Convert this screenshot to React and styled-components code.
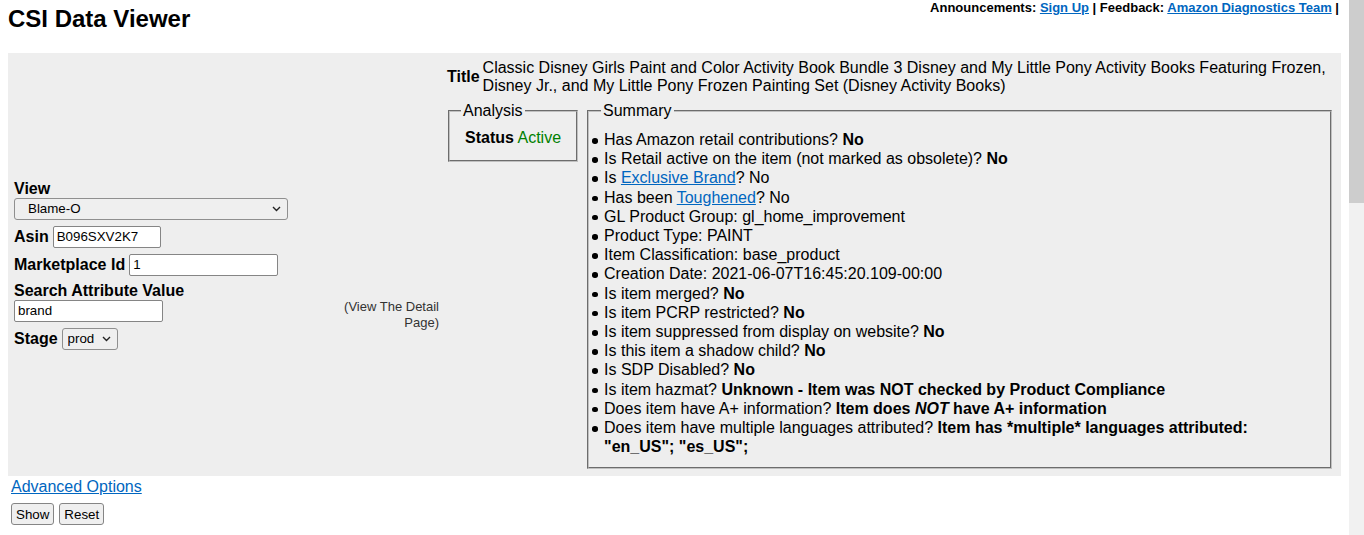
import React from "react";
import styled, { createGlobalStyle } from "styled-components";

const GlobalStyle = createGlobalStyle`
  html, body {
    margin: 0;
    overflow: hidden;
  }
  body {
    font-family: "Liberation Sans", Arial, sans-serif;
    font-size: 16px;
    color: #000;
    background: #fff;
  }
`;

const Shell = styled.div`
  display: flex;
  height: 100vh;
`;

const Page = styled.div`
  flex: 1;
  min-width: 0;
  overflow: hidden;
  padding: 0 8px;
`;

const ScrollTrack = styled.div`
  flex: none;
  width: 15px;
  background: #f1f1f1;
`;

const ScrollThumb = styled.div`
  height: 203px;
  background: #cdcdcd;
`;

const Header = styled.header`
  display: flex;
  justify-content: space-between;
  align-items: flex-start;
  height: 53px;
`;

const PageTitle = styled.h1`
  margin: 0;
  padding-top: 5px;
  font-size: 24px;
  line-height: 28px;
  font-weight: bold;
`;

const TopLinks = styled.div`
  font-size: 13px;
  line-height: 15px;
  font-weight: bold;
  padding-right: 2px;
`;

const Link = styled.a`
  color: #0066c0;
  text-decoration: underline;
  cursor: pointer;
`;

const Panel = styled.div`
  display: grid;
  grid-template-columns: 435px 1fr;
  background: #eeeeee;
  min-height: 423px;
`;

const FormCell = styled.div`
  display: grid;
  grid-template-columns: 1fr auto;
  align-content: center;
  padding: 0 4px 0 6px;
`;

const Label = styled.label`
  grid-column: 1;
  display: block;
  font-weight: bold;
  font-size: 16px;
  line-height: 18px;
`;

const FieldRow = styled.div`
  grid-column: 1;
  display: flex;
  align-items: center;
  gap: 4px;
  height: 22px;
  margin-bottom: ${(p) => (p.$last ? 0 : 6)}px;
`;

const TextInput = styled.input`
  box-sizing: border-box;
  width: ${(p) => p.$w}px;
  height: 22px;
  padding: 1px 3px;
  border: 1px solid #858585;
  border-radius: 2px;
  background: #fff;
  font-family: "Liberation Sans", Arial, sans-serif;
  font-size: 13.33px;
  color: #000;
`;

const SelectWrap = styled.div`
  position: relative;
  width: ${(p) => p.$w}px;
  height: 22px;
`;

const Select = styled.select`
  appearance: none;
  -webkit-appearance: none;
  box-sizing: border-box;
  width: 100%;
  height: 100%;
  padding: 0 18px 0 ${(p) => p.$indent}px;
  border: 1px solid #8f8f8f;
  border-radius: 3px;
  background: #efefef;
  font-family: "Liberation Sans", Arial, sans-serif;
  font-size: 13.33px;
  color: #000;
`;

const Chevron = styled.svg`
  position: absolute;
  right: 7px;
  top: 8px;
  pointer-events: none;
`;

const Note = styled.div`
  grid-column: 2;
  grid-row: 6 / span 2;
  align-self: start;
  margin-top: -1px;
  width: 100px;
  text-align: right;
  font-size: 13px;
  line-height: 16.5px;
  color: #333;
`;

const InfoCell = styled.div`
  padding: 6px 9px 6px 4px;
`;

const TitleRow = styled.div`
  display: flex;
  align-items: center;
  gap: 3px;
`;

const TitleLabel = styled.span`
  font-weight: bold;
  font-size: 16px;
`;

const TitleText = styled.div`
  flex: 1;
  font-size: 16px;
  line-height: 18px;
`;

const BoxRow = styled.div`
  display: flex;
  align-items: flex-start;
  gap: 9px;
  margin-top: 7px;
  margin-left: 1px;
`;

const Box = styled.fieldset`
  margin: 0;
  padding: ${(p) => p.$pad};
  border: 2px groove rgb(192, 192, 192);
  flex: ${(p) => (p.$grow ? 1 : "none")};
  min-width: 0;
`;

const Legend = styled.legend`
  padding: 0 2px;
  margin-left: ${(p) => p.$offset || 0}px;
  font-size: 16px;
  line-height: 18px;
`;

const StatusLine = styled.div`
  padding: 9px 4px 0;
  line-height: 18px;
`;

const Green = styled.span`
  color: #008000;
`;

const List = styled.ul`
  margin: 0;
  padding: 10px 0 0;
  list-style: none;
`;

const Item = styled.li`
  display: flex;
  line-height: 19.2px;
`;

const Bullet = styled.span`
  flex: none;
  width: 13px;
  display: flex;
  align-items: flex-start;
  &::before {
    content: "";
    display: block;
    width: 5.5px;
    height: 5.5px;
    margin: 8px 0 0 1px;
    border-radius: 50%;
    background: #000;
  }
`;

const ItemText = styled.span`
  flex: 1;
  min-width: 0;
`;

const Footer = styled.div`
  padding: 2px 3px 0;
`;

const AdvLink = styled(Link)`
  display: inline-block;
  font-size: 16px;
  line-height: 18px;
`;

const Buttons = styled.div`
  display: flex;
  gap: 5px;
  margin-top: 7px;
`;

const Button = styled.button`
  box-sizing: border-box;
  height: 22px;
  padding: 1px 4px;
  border: 1px solid #858585;
  border-radius: 3px;
  background: #efefef;
  font-family: "Liberation Sans", Arial, sans-serif;
  font-size: 13.33px;
  color: #000;
`;

const ChevronIcon = () => (
  <Chevron width="9" height="6" viewBox="0 0 9 6">
    <path d="M1 1 L4.5 4.5 L8 1" fill="none" stroke="#222" strokeWidth="1.4" />
  </Chevron>
);

const summary = [
  <>Has Amazon retail contributions? <b>No</b></>,
  <>Is Retail active on the item (not marked as obsolete)? <b>No</b></>,
  <>Is <Link>Exclusive Brand</Link>? No</>,
  <>Has been <Link>Toughened</Link>? No</>,
  <>GL Product Group: gl_home_improvement</>,
  <>Product Type: PAINT</>,
  <>Item Classification: base_product</>,
  <>Creation Date: 2021-06-07T16:45:20.109-00:00</>,
  <>Is item merged? <b>No</b></>,
  <>Is item PCRP restricted? <b>No</b></>,
  <>Is item suppressed from display on website? <b>No</b></>,
  <>Is this item a shadow child? <b>No</b></>,
  <>Is SDP Disabled? <b>No</b></>,
  <>Is item hazmat? <b>Unknown - Item was NOT checked by Product Compliance</b></>,
  <>Does item have A+ information? <b>Item does <i>NOT</i> have A+ information</b></>,
  <>Does item have multiple languages attributed? <b>Item has *multiple* languages attributed: "en_US"; "es_US";</b></>,
];

export default function App() {
  return (
    <Shell>
      <GlobalStyle />
      <Page>
        <Header>
          <PageTitle>CSI Data Viewer</PageTitle>
          <TopLinks>
            Announcements: <Link>Sign Up</Link> | Feedback: <Link>Amazon Diagnostics Team</Link> |
          </TopLinks>
        </Header>
        <Panel>
          <FormCell>
            <Label>View</Label>
            <FieldRow>
              <SelectWrap $w={274}>
                <Select $indent={13} defaultValue="blame">
                  <option value="blame">Blame-O</option>
                </Select>
                <ChevronIcon />
              </SelectWrap>
            </FieldRow>
            <FieldRow>
              <Label as="span">Asin</Label>
              <TextInput $w={108} defaultValue="B096SXV2K7" />
            </FieldRow>
            <FieldRow>
              <Label as="span">Marketplace Id</Label>
              <TextInput $w={149} defaultValue="1" />
            </FieldRow>
            <Label>Search Attribute Value</Label>
            <FieldRow>
              <TextInput $w={149} defaultValue="brand" />
            </FieldRow>
            <FieldRow $last>
              <Label as="span">Stage</Label>
              <SelectWrap $w={56}>
                <Select $indent={5} defaultValue="prod">
                  <option value="prod">prod</option>
                </Select>
                <ChevronIcon />
              </SelectWrap>
            </FieldRow>
            <Note>(View The Detail Page)</Note>
          </FormCell>
          <InfoCell>
            <TitleRow>
              <TitleLabel>Title</TitleLabel>
              <TitleText>
                Classic Disney Girls Paint and Color Activity Book Bundle 3 Disney and My Little Pony Activity Books Featuring Frozen, Disney Jr., and My Little Pony Frozen Painting Set (Disney Activity Books)
              </TitleText>
            </TitleRow>
            <BoxRow>
              <Box $pad="0 11px 13px">
                <Legend>Analysis</Legend>
                <StatusLine>
                  <b>Status</b> <Green>Active</Green>
                </StatusLine>
              </Box>
              <Box $grow $pad="0 12px 11px 2px">
                <Legend $offset={10}>Summary</Legend>
                <List>
                  {summary.map((s, i) => (
                    <Item key={i}>
                      <Bullet />
                      <ItemText>{s}</ItemText>
                    </Item>
                  ))}
                </List>
              </Box>
            </BoxRow>
          </InfoCell>
        </Panel>
        <Footer>
          <AdvLink>Advanced Options</AdvLink>
          <Buttons>
            <Button>Show</Button>
            <Button>Reset</Button>
          </Buttons>
        </Footer>
      </Page>
      <ScrollTrack>
        <ScrollThumb />
      </ScrollTrack>
    </Shell>
  );
}
